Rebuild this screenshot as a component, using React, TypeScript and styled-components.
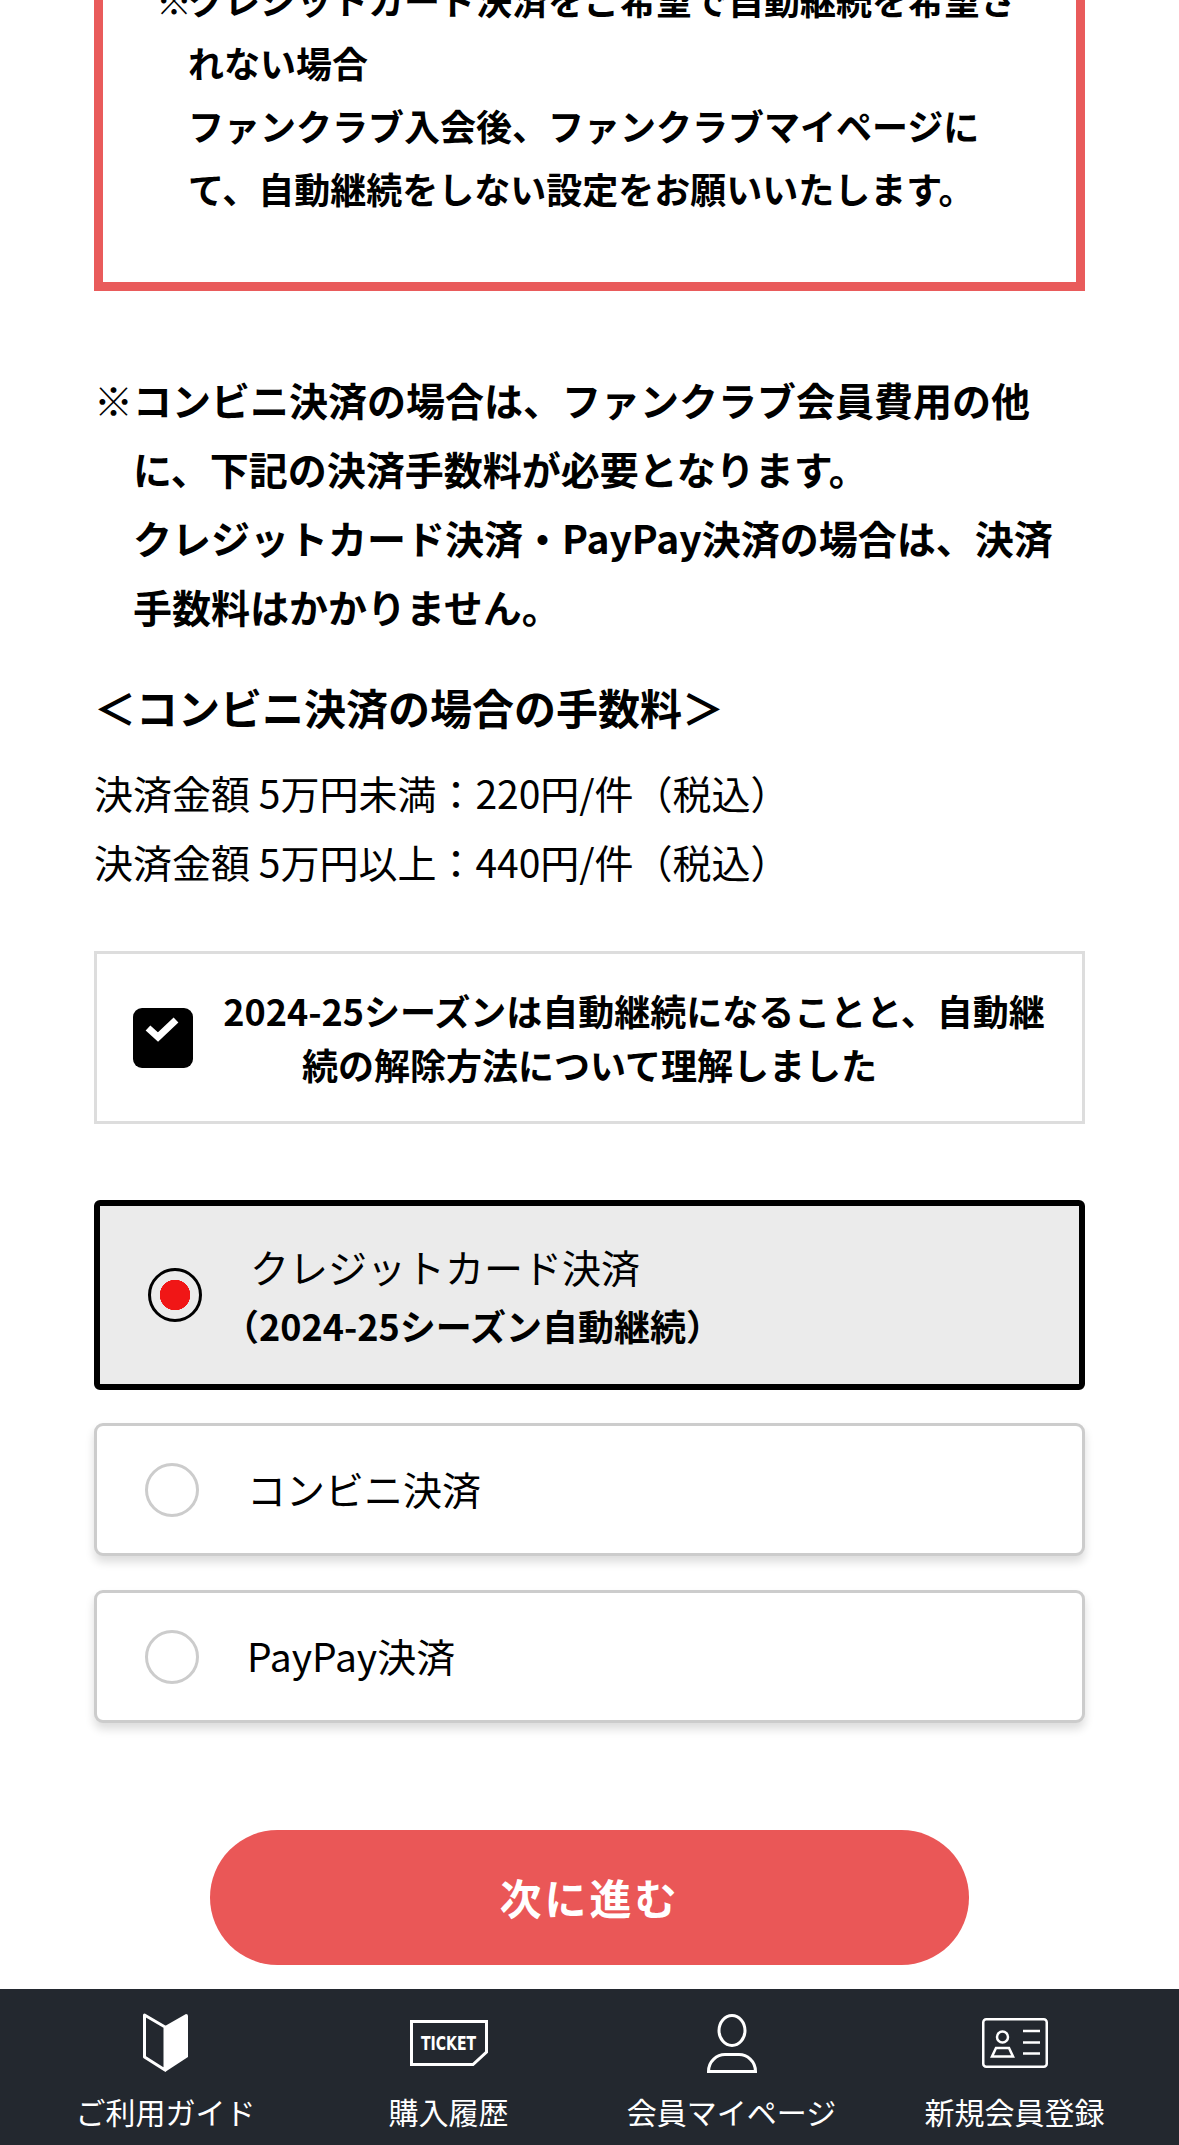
import styled, { createGlobalStyle } from "styled-components";

const GlobalStyle = createGlobalStyle`
  html, body {
    margin: 0;
    padding: 0;
    background: #fff;
    color: #000;
    font-family: "Noto Sans CJK JP", "Noto Sans", sans-serif;
  }
  * { box-sizing: border-box; }
`;

const GuideIcon = () => (
  <svg width="46" height="60" viewBox="0 0 46 60" fill="none">
    <path d="M1.5 2 L22 14 V57 L1.5 44 Z" stroke="#fff" strokeWidth="3" strokeLinejoin="round" />
    <path d="M22 13 L43 1 Q45 1 45 3 V44 L22 59 Z" fill="#fff" />
  </svg>
);

const TicketIcon = () => (
  <svg width="78" height="46" viewBox="0 0 78 46" fill="none">
    <path d="M1.5 1.5 H76.5 V32 L63 44.5 H1.5 Z" stroke="#fff" strokeWidth="3" />
    <text x="38.5" y="30" textAnchor="middle" fill="#fff" fontSize="19" fontWeight="700" fontFamily="DejaVu Sans, sans-serif" textLength="55" lengthAdjust="spacingAndGlyphs">TICKET</text>
  </svg>
);

const MemberIcon = () => (
  <svg width="50" height="59" viewBox="0 0 50 59" fill="none">
    <ellipse cx="25" cy="16.5" rx="13" ry="15" stroke="#fff" strokeWidth="3" />
    <path d="M1.5 57.5 C1.5 47 10 40.5 18 40.5 H32 C40 40.5 48.5 47 48.5 57.5 Z" stroke="#fff" strokeWidth="3" />
  </svg>
);

const CardIcon = () => (
  <svg width="66" height="50" viewBox="0 0 66 50" fill="none">
    <rect x="1.25" y="1.25" width="63.5" height="47.5" rx="3" stroke="#fff" strokeWidth="2.5" />
    <circle cx="20.5" cy="19" r="5.5" stroke="#fff" strokeWidth="2.5" />
    <path d="M10 38.5 L14 30 H27 L31 38.5 Z" stroke="#fff" strokeWidth="2.5" />
    <path d="M41 13 H58 M41 24.5 H58 M41 35.5 H58" stroke="#fff" strokeWidth="2.5" />
  </svg>
);

const CheckIcon = () => (
  <svg width="60" height="60" viewBox="0 0 60 60" fill="none">
    <path d="M15 20 L25 29 L43 12" stroke="#fff" strokeWidth="7" />
  </svg>
);

const navItems = [
  { label: "ご利用ガイド", icon: <GuideIcon /> },
  { label: "購入履歴", icon: <TicketIcon /> },
  { label: "会員マイページ", icon: <MemberIcon /> },
  { label: "新規会員登録", icon: <CardIcon /> },
];

const App = () => {
  return (
    <Page>
      <GlobalStyle />
      <Content>
        <AlertBox>
          <AlertText>
            <AlertMark>※</AlertMark>クレジットカード決済をご希望で自動継続を希望さ<br />
            れない場合<br />
            ファンクラブ入会後、ファンクラブマイページに<br />
            て、自動継続をしない設定をお願いいたします。
          </AlertText>
        </AlertBox>

        <Note>
          <NoteMark>※</NoteMark>コンビニ決済の場合は、ファンクラブ会員費用の他に、下記の決済手数料が必要となります。<br />
          クレジットカード決済・PayPay決済の場合は、決済手数料はかかりません。
        </Note>

        <FeeTitle>＜コンビニ決済の場合の手数料＞</FeeTitle>
        <FeeRow>決済金額 5万円未満：220円/件（税込）</FeeRow>
        <FeeRow>決済金額 5万円以上：440円/件（税込）</FeeRow>

        <AgreeBox>
          <CheckMark><CheckIcon /></CheckMark>
          <AgreeText>2024-25シーズンは自動継続になることと、自動継続の解除方法について理解しました</AgreeText>
        </AgreeBox>

        <SelectedOption>
          <SelectedRadio />
          <SelectedLabel>
            <SelectedName>クレジットカード決済</SelectedName>
            <SelectedSub>（2024-25シーズン自動継続）</SelectedSub>
          </SelectedLabel>
        </SelectedOption>

        <OptionList>
          <Option>
            <Radio />
            <OptionLabel>コンビニ決済</OptionLabel>
          </Option>
          <Option>
            <Radio />
            <OptionLabel>PayPay決済</OptionLabel>
          </Option>
        </OptionList>

        <NextButton>次に進む</NextButton>
      </Content>

      <Footer>
        {navItems.map((item) => (
          <NavItem key={item.label}>
            <NavIcon>{item.icon}</NavIcon>
            <NavLabel>{item.label}</NavLabel>
          </NavItem>
        ))}
      </Footer>
    </Page>
  );
};

const Page = styled.div`
  width: 1179px;
  height: 2145px;
  overflow: hidden;
  display: flex;
  flex-direction: column;
`;

const Content = styled.div`
  flex: 1;
  padding: 0 94px;
  min-height: 0;
`;

const AlertBox = styled.div`
  height: 291px;
  border: 9px solid #e95b5b;
  border-top: 0;
  overflow: hidden;
`;

const AlertText = styled.p`
  margin: -32px 0 0 85px;
  font-size: 36px;
  font-weight: 700;
  line-height: 63px;
  white-space: nowrap;
`;

const AlertMark = styled.span`
  display: inline-block;
  width: 32px;
  margin-left: -32px;
  font-weight: 400;
`;

const Note = styled.p`
  margin: 74px 0 0;
  padding: 0 16px 0 39px;
  font-size: 39px;
  font-weight: 700;
  line-height: 69px;
`;

const NoteMark = styled.span`
  display: inline-block;
  width: 39px;
  margin-left: -39px;
  font-weight: 400;
`;

const FeeTitle = styled.h2`
  margin: 36px 0 21px;
  font-size: 42px;
  font-weight: 700;
  line-height: 60px;
`;

const FeeRow = styled.p`
  margin: 0;
  font-size: 39px;
  font-weight: 400;
  line-height: 69px;
`;

const AgreeBox = styled.div`
  position: relative;
  display: flex;
  align-items: center;
  height: 173px;
  margin-top: 55px;
  padding: 0 30px 2px;
  border: 3px solid #ddd;
`;

const CheckMark = styled.span`
  position: absolute;
  left: 36px;
  top: 54px;
  width: 60px;
  height: 60px;
  border-radius: 9px;
  background: #000;

  svg {
    display: block;
  }
`;

const AgreeText = styled.p`
  flex: 1;
  margin: 0;
  font-size: 36px;
  font-weight: 700;
  line-height: 54px;
  text-align: center;
  text-indent: 89px;
`;

const SelectedOption = styled.div`
  display: flex;
  align-items: center;
  height: 190px;
  margin-top: 76px;
  padding-left: 48px;
  border: 6px solid #000;
  border-radius: 6px;
  background: #ebebeb;
`;

const SelectedRadio = styled.span`
  flex: none;
  width: 54px;
  height: 54px;
  border: 3px solid #000;
  border-radius: 50%;
  background: radial-gradient(circle, #f01616 15px, transparent 15.5px);
`;

const SelectedLabel = styled.div`
  margin-left: 21px;
  padding-top: 2px;
  font-size: 36px;
  line-height: 59px;
`;

const SelectedName = styled.div`
  margin-left: 27px;
  font-size: 39px;
  font-weight: 400;
`;

const SelectedSub = styled.div`
  font-weight: 700;
`;

const OptionList = styled.div`
  display: flex;
  flex-direction: column;
  gap: 34px;
  margin-top: 33px;
`;

const Option = styled.div`
  display: flex;
  align-items: center;
  height: 133px;
  padding-left: 48px;
  border: 3px solid #ccc;
  border-radius: 9px;
  background: #fff;
  box-shadow: 0 6px 10px rgba(0, 0, 0, 0.14);
`;

const Radio = styled.span`
  flex: none;
  width: 54px;
  height: 54px;
  border: 3px solid #ccc;
  border-radius: 50%;
`;

const OptionLabel = styled.span`
  margin: 0 0 3px 48px;
  font-size: 39px;
  line-height: 54px;
`;

const NextButton = styled.button`
  display: block;
  width: 759px;
  height: 135px;
  margin: 107px auto 0;
  padding-bottom: 4px;
  border: 0;
  border-radius: 68px;
  background: #ea5757;
  color: #fff;
  font-family: inherit;
  font-size: 42px;
  font-weight: 700;
  letter-spacing: 3px;
`;

const Footer = styled.nav`
  flex: none;
  display: grid;
  grid-template-columns: repeat(4, 283px);
  height: 156px;
  padding: 22px 0 0 24px;
  background: #23282f;
`;

const NavItem = styled.div`
  display: flex;
  flex-direction: column;
  align-items: center;
`;

const NavIcon = styled.div`
  display: flex;
  align-items: center;
  justify-content: center;
  height: 64px;
`;

const NavLabel = styled.span`
  margin-top: 14px;
  color: #fff;
  font-size: 30px;
  line-height: 44px;
  white-space: nowrap;
`;

export default App;
